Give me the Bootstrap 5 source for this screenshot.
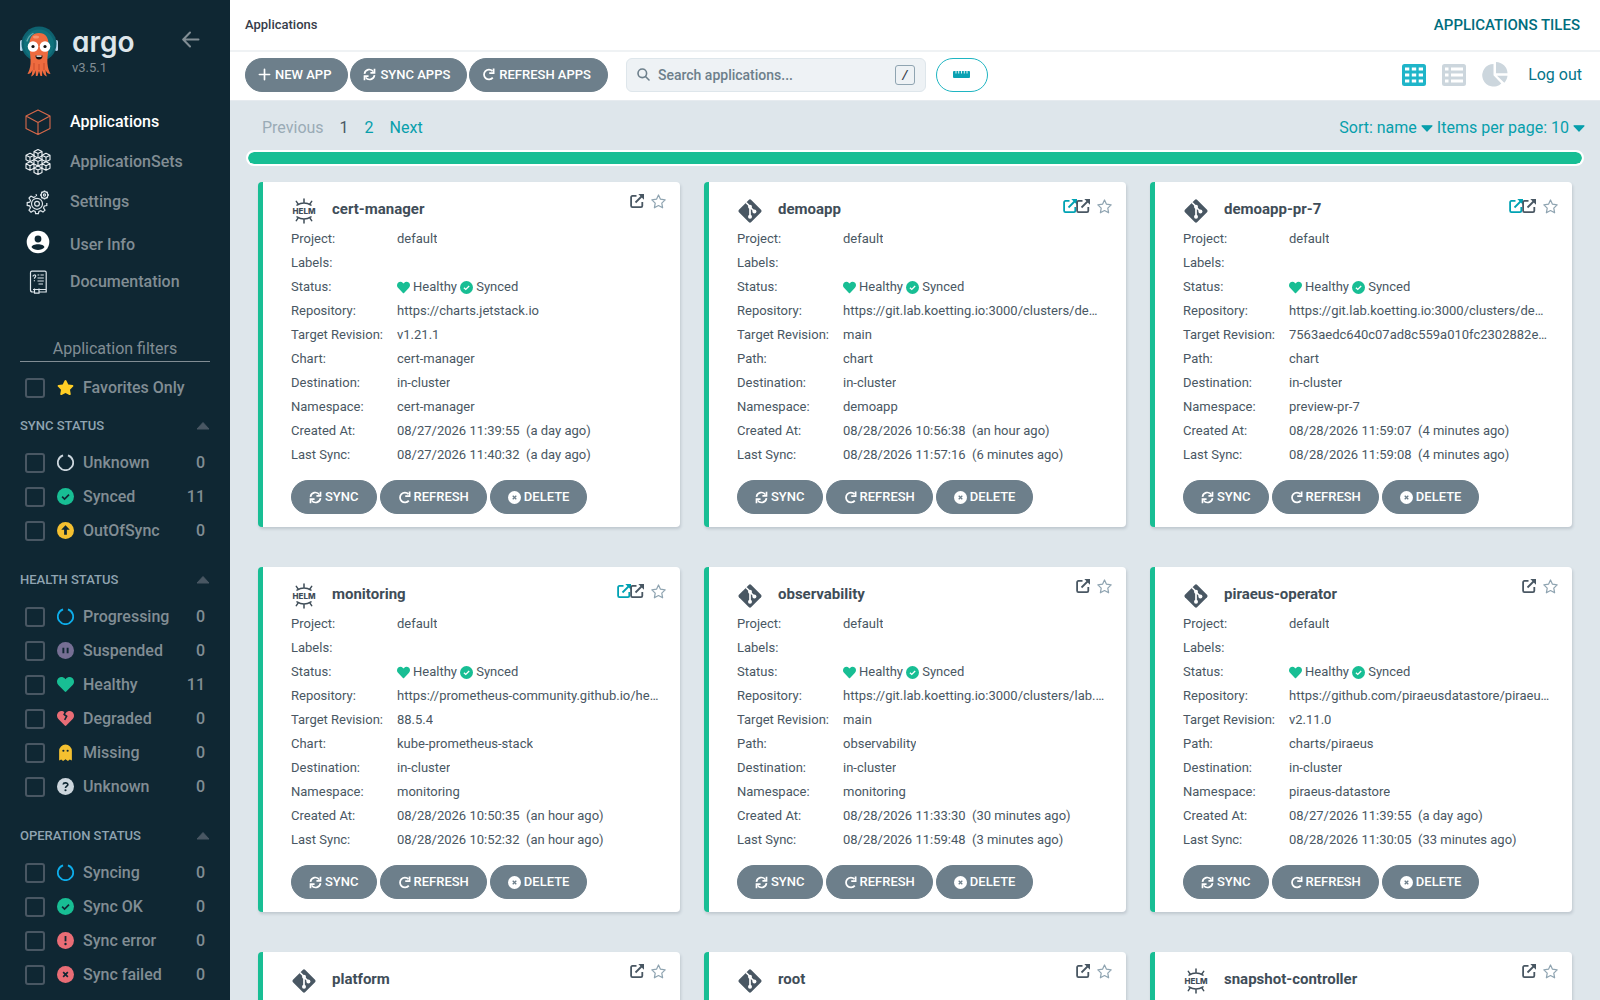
<!DOCTYPE html>
<html lang="en">
<head>
<meta charset="utf-8">
<meta name="viewport" content="width=device-width, initial-scale=1">
<title>Applications Tiles - Argo CD</title>
<link href="https://cdn.jsdelivr.net/npm/bootstrap@5.3.0/dist/css/bootstrap.min.css" rel="stylesheet">
<style>
  :root { --ink:#495763; --slate:#6d7f8b; --teal:#079fac; --deep:#006d7d; --ok:#18be94; --canvas:#dee6eb; --night:#0f2733; }
  body { font-family:Roboto,"Liberation Sans",sans-serif; font-size:13px; line-height:24px; color:var(--ink); background:var(--canvas); }
  a { text-decoration:none; }
  svg { display:block; flex:none; }
  .ic { width:1em; height:1em; }

  /* sidebar */
  .side { width:230px; background:var(--night); color:#818d94; flex:none; }
  .brand { height:102px; padding:26px 30px 0 20px; }
  .brand-text { margin-left:14px; }
  .brand-name { font-family:Inter,Roboto,sans-serif; font-feature-settings:"cv11"; font-weight:600; font-size:28px; line-height:32px; color:#dee6eb; margin-bottom:2px; }
  .brand-ver { line-height:16px; }
  .side-link { height:40px; padding-left:25px; gap:19px; font-size:16px; font-weight:500; color:#818d94; }
  .side-link.active { color:#fff; }
  .side-link .tall { padding-top:6px; }
  .filters { padding:35px 20px 0; }
  .filters-title { font-size:16px; font-weight:400; line-height:24px; border-bottom:1px solid #818d94; text-align:center; margin:0 0 9px; }
  .f-row { height:34px; padding:0 5px; font-size:16px; font-weight:500; }
  .f-row .form-check-input { width:20px; height:20px; margin:0 12px 0 0; background-color:transparent; border:2px solid #495763; border-radius:3px; }
  .f-row svg { width:17px; height:17px; margin:0 9px 1px 0; }
  .f-head { font-size:13px; font-weight:500; line-height:20px; color:#8fa4b1; margin:0 0 10px; }
  .f-head button { padding:0; border:0; background:none; }
  .f-group { margin-bottom:22px; }
  .f-first { margin-bottom:11px; }

  /* top bars */
  .crumbs { height:52px; padding:0 20px 0 15px; border-bottom:2px solid #eff2f4; color:#363c4a; font-weight:500; background:#fff; }
  .crumbs h1 { font-size:15px; font-weight:500; color:var(--deep); margin:0; }
  .tools { height:49px; padding:0 18px 3px 15px; background:#fff; border-bottom:1px solid #e6ebef; }
  .pill { --bs-btn-color:#fff; --bs-btn-bg:var(--slate); --bs-btn-border-color:var(--slate); --bs-btn-hover-color:#fff; --bs-btn-hover-bg:#495763; --bs-btn-hover-border-color:#495763;
    height:34px; border-radius:17px; padding:0 17px; font-size:13px; font-weight:500; line-height:32px; display:inline-flex; align-items:center; }
  .tool-pills { gap:2px; }
  .tools .pill { padding:0 16px 0 12px; gap:4px; }
  .search { width:300px; height:34px; margin-left:18px; padding:0 10px 0 10px; background:#eef2f5; border:1px solid #dee6eb; border-radius:6px; }
  .search input { font-size:14px; font-weight:500; color:var(--slate); background:none; border:0; padding:0; line-height:20px; box-shadow:none; }
  .search input::placeholder { color:var(--slate); opacity:1; }
  .key { width:20px; height:20px; border:1px solid #8fa4b1; border-radius:3px; text-align:center; padding:0; background:none; color:#363c4a; font:italic 500 13px/18px Roboto,sans-serif; }
  .ruler-btn { width:52px; height:34px; border:1px solid #1fb5c2; border-radius:17px; background:#fff; margin-left:10px; }
  .views { gap:16px; margin-right:20px; }
  .logout { font-size:16px; color:#04758a; }

  /* list */
  .pager { height:49px; padding:5px 15px 0 32px; font-size:16px; }
  .pager a, .pager button { color:var(--teal); }
  .pager button { border:0; background:none; padding:0; }
  .pager .off { color:#9aabb6; }
  .health-bar { height:16px; margin:0 16px; border:2px solid #fff; border-radius:8px; background:#fff; }
  .health-bar .progress-bar { background:var(--ok); border-radius:6px; }
  .tiles { padding:16px 28px 0; }
  .tiles .row { --bs-gutter-x:24px; --bs-gutter-y:40px; margin-top:-40px; }
  .tiles .row > * { margin-top:40px; }
  .tile { border:0; border-left:5px solid var(--ok); border-radius:4px; box-shadow:1px 2px 3px rgba(73,87,99,.2); padding:0 20px 13px 28px; min-height:345px; color:var(--ink); }
  .tile-top { height:45px; }
  .tile-top h2 { font-size:15px; font-weight:700; line-height:20px; margin:17px 0 0 15px; color:#3f4d58; }
  .tile-top > svg { margin-top:16px; width:26px; height:26px; }
  .marks { padding-top:11px; margin-right:-6px; gap:7px; height:27px; color:var(--ink); }
  .marks.linked { padding-top:16px; height:32px; }
  .marks a { color:#00a2b3; margin-right:-1px; }
  .marks button { border:0; padding:0; background:none; color:inherit; }
  .marks .fav { color:#8fa4b1; }
  .t-key { width:106px; flex:none; }
  .t-val { min-width:0; }
  .t-val svg { color:var(--ok); margin-right:3px; }
  .acts { gap:3px; padding-top:13px; }
  .acts .pill { gap:3px; }
</style>
</head>
<body class="vh-100 overflow-hidden">

<svg width="0" height="0" class="position-absolute" aria-hidden="true">
  <symbol id="sync" viewBox="0 0 14 14"><g fill="none" stroke="currentColor" stroke-width="1.8"><path d="M1.6 6.3a5.3 5.3 0 0 1 9.6-2.4M12.4 7.7a5.3 5.3 0 0 1-9.6 2.4"/><path d="M12.4 .8v4.5H8M1.6 13.2V8.7H6"/></g></symbol>
  <symbol id="redo" viewBox="0 0 14 14"><g fill="none" stroke="currentColor" stroke-width="1.9"><path d="M11.6 10.4A5.3 5.3 0 1 1 11.3 3.4"/><path d="M12.5 .6v4.9H7.8"/></g></symbol>
  <symbol id="plus" viewBox="0 0 14 14"><path d="M7 1.500v11M1.500 7h11" stroke="currentColor" stroke-width="1.800" stroke-linecap="round"/></symbol>
  <symbol id="xcirc" viewBox="0 0 16 16"><circle cx="8" cy="8" r="8" fill="currentColor"/><path d="M5.800 5.800l4.400 4.400M10.200 5.800l-4.400 4.400" stroke="var(--cut,#6d7f8b)" stroke-width="1.600"/></symbol>
  <symbol id="check" viewBox="0 0 16 16"><circle cx="8" cy="8" r="8" fill="currentColor"/><path d="M4.800 8.200l2.300 2.200 4.200-4.200" fill="none" stroke="var(--cut,#fff)" stroke-width="1.600"/></symbol>
  <symbol id="up" viewBox="0 0 16 16"><circle cx="8" cy="8" r="8" fill="currentColor"/><path d="M8 3l4 4.300H9.300V12H6.700V7.300H4z" fill="#0f2733"/></symbol>
  <symbol id="pause" viewBox="0 0 16 16"><circle cx="8" cy="8" r="8" fill="currentColor"/><path d="M6 5.300v5.400M10 5.300v5.400" stroke="#0f2733" stroke-width="1.800"/></symbol>
  <symbol id="bang" viewBox="0 0 16 16"><circle cx="8" cy="8" r="8" fill="currentColor"/><path d="M8 3.800v5" stroke="#0f2733" stroke-width="1.700"/><circle cx="8" cy="11.300" r="1.100" fill="#0f2733"/></symbol>
  <symbol id="quest" viewBox="0 0 16 16"><circle cx="8" cy="8" r="8" fill="currentColor"/><path d="M5.800 6.100C6 4 10.300 4.200 10.200 6.300 10.100 7.600 8 7.700 8 9.300" fill="none" stroke="#0f2733" stroke-width="1.600"/><circle cx="8" cy="11.500" r="1" fill="#0f2733"/></symbol>
  <symbol id="ring" viewBox="0 0 16 16"><path d="M10.300 1.200a7.200 7.200 0 1 1-4.600 0" fill="none" stroke="currentColor" stroke-width="1.700"/></symbol>
  <symbol id="heart" viewBox="0 0 512 512"><path fill="currentColor" d="M462.300 62.600C407.500 15.900 326 24.300 275.700 76.200L256 96.500l-19.700-20.300C186.100 24.300 104.500 15.900 49.700 62.600c-62.800 53.600-66.100 149.800-9.900 207.900l193.500 199.800c12.500 12.900 32.800 12.900 45.300 0l193.500-199.800c56.300-58.100 53-154.300-9.800-207.900z"/></symbol>
  <symbol id="broken" viewBox="0 0 512 512"><use href="#heart"/><path d="M285 40l-45 95 75 55-60 105" transform="translate(-25 0)" fill="none" stroke="#0f2733" stroke-width="48"/></symbol>
  <symbol id="ghost" viewBox="0 0 16 16"><path fill="currentColor" d="M2 6.500a6 6 0 0 1 12 0v9l-2-1-1.700 1.400L8 14.400l-2.300 1.500L4 14.500l-2 1z"/><circle cx="6" cy="6.400" r="1" fill="#0f2733"/><circle cx="10" cy="6.400" r="1" fill="#0f2733"/></symbol>
  <symbol id="star" viewBox="0 0 576 512"><path fill="currentColor" d="M259.300 17.800L194 150.200 47.900 171.500c-26.200 3.800-36.700 36.100-17.700 54.600l105.700 103-25 145.500c-4.500 26.300 23.200 46 46.400 33.700L288 439.600l130.700 68.700c23.200 12.200 50.900-7.400 46.400-33.700l-25-145.500 105.700-103c19-18.500 8.500-50.800-17.700-54.600L382 150.200 316.700 17.800c-11.700-23.600-45.600-23.900-57.400 0z"/></symbol>
  <symbol id="staro" viewBox="0 0 16 16"><path fill="none" stroke="currentColor" stroke-width="1.300" stroke-linejoin="round" d="M8 1l2.100 4.500 5 .7-3.600 3.500.9 5L8 12.300l-4.400 2.400.9-5L.9 6.200l5-.7z"/></symbol>
  <symbol id="ext" viewBox="0 0 14 14"><g fill="none" stroke="currentColor" stroke-width="1.800"><path d="M6.500 1.900H2.400a1.300 1.300 0 0 0-1.300 1.300v8.600a1.300 1.300 0 0 0 1.300 1.300h8.600a1.300 1.300 0 0 0 1.300-1.300V8"/><path d="M5.500 8.500L12 2"/></g><path fill="currentColor" d="M8.300 0H14v5.700z"/></symbol>
  <symbol id="caret-up" viewBox="0 0 14 8"><path d="M7 .5L13 7H1z" fill="#495763" stroke="#495763" stroke-linejoin="round"/></symbol>
  <symbol id="caret-down" viewBox="0 0 10 6"><path d="M.7.700h8.600L5 5.300z" fill="currentColor" stroke="currentColor" stroke-linejoin="round"/></symbol>
  <symbol id="git" viewBox="0 0 26 26"><rect x="4.300" y="4.300" width="17.400" height="17.400" rx="1.800" transform="rotate(45 13 13)" fill="#495763"/><g stroke="#fff" stroke-width="1.700" fill="none"><path d="M9 4.500l4 4V19M13 9l4.500 4.500"/></g><g fill="#fff"><circle cx="13" cy="8.800" r="2"/><circle cx="13" cy="18.800" r="2"/><circle cx="17.400" cy="13.400" r="2"/></g></symbol>
  <symbol id="helm" viewBox="0 0 26 26"><g fill="none" stroke="#3f4d58" stroke-width="1.500" stroke-linecap="round"><path d="M6 7.200q7-4.400 14 0M13 4.800V.9M7.400 6.400L5.300 3.400M18.600 6.400l2.100-3M6 18.800q7 4.400 14 0M13 21.200v3.900M7.400 19.600l-2.100 3M18.600 19.600l2.100 3"/></g><text x="13" y="15.900" text-anchor="middle" font-family="Inter, sans-serif" font-weight="800" font-size="8" fill="#3f4d58">HELM</text></symbol>
</svg>

<div class="d-flex h-100">
  <aside class="side h-100 overflow-hidden">
    <div class="brand d-flex align-items-start">
      <svg width="38" height="51" viewBox="0 0 38 51" role="img" aria-label="Argo">
        <rect x="0" y="14" width="3" height="11" rx="1.500" fill="#b8d4ea"/><rect x="35" y="14" width="3" height="11" rx="1.500" fill="#b8d4ea"/>
        <circle cx="19" cy="18" r="17.500" fill="#0e6270"/><circle cx="19" cy="18.500" r="15" fill="#10717c"/>
        <path d="M7 15a13 13 0 0 1 6-7.500" stroke="#5fa9b0" stroke-width="1.300" fill="none" stroke-linecap="round"/>
        <path d="M19 7c-6.500 0-9.500 4.500-9.500 11 0 9 1.500 13 1 20-.3 4-1.500 7-3 10 2.500 0 4-1.500 4.800-4 0 2.500-.3 4.500-1.300 6.500 2.500-.5 4-3 4.300-6 .4 2 .7 4 .5 5.500h1.700l1.500-5 1.500 5h1.700c-.2-1.500 0-3.500.5-5.500.3 3 1.800 5.500 4.300 6-1-2-1.300-4-1.300-6.500.8 2.500 2.300 4 4.800 4-1.500-3-2.700-6-3-10-.5-7 1-11 1-20C28.500 11.500 25.500 7 19 7z" fill="#ee6b3f"/>
        <path d="M14 37v7M19 38v6M24 37v7" stroke="#c94d2c" stroke-width="1"/>
        <ellipse cx="16" cy="11" rx="3" ry="1.500" fill="#f5946f"/>
        <circle cx="13" cy="20.500" r="5.300" fill="#fff"/><circle cx="25" cy="20.500" r="5.300" fill="#fff"/>
        <circle cx="13" cy="20.500" r="1.600" fill="#111"/><circle cx="25" cy="20.500" r="1.600" fill="#111"/>
        <path d="M15.500 29.500h7a3.500 4 0 0 1-7 0z" fill="#111"/><path d="M16.500 29.500h5v1.300h-5z" fill="#fff"/>
      </svg>
      <div class="brand-text flex-grow-1">
        <div class="brand-name">argo</div>
        <div class="brand-ver">v3.5.1</div>
      </div>
      <button type="button" class="btn p-0 border-0" aria-label="Collapse sidebar"><svg class="mt-1" width="18" height="18" viewBox="0 0 18 18" fill="none" stroke="#818d94" stroke-width="2" stroke-linecap="round" stroke-linejoin="round"><path d="M16.500 9.500H1.500M8 2.500L1.200 9.500 8 16.500"/></svg></button>
    </div>

    <nav>
      <a href="#" class="side-link active d-flex align-items-center" aria-current="page"><svg width="26" height="26" viewBox="0 0 26 26" fill="none" stroke="#d9694a" stroke-width="1.100" stroke-linejoin="round"><path d="M13 1l12 6v12.500l-12 6-12-6V7zM1 7l12 6.500L25 7M13 13.500v12"/></svg><span>Applications</span></a>
      <a href="#" class="side-link d-flex align-items-center"><svg width="26" height="26" viewBox="0 0 26 26" fill="#0f2733" stroke="#eef2f5" stroke-width="1.100" stroke-linejoin="round"><defs><path id="cube" d="M0-4.200l4 2v4.400l-4 2-4-2v-4.400zM-4-2.200l4 2 4-2M0-.2v4.400"/></defs><use href="#cube" x="13" y="4.700"/><use href="#cube" x="5" y="8.500"/><use href="#cube" x="21" y="8.500"/><use href="#cube" x="5" y="17"/><use href="#cube" x="21" y="17"/><use href="#cube" x="13" y="12.800"/><use href="#cube" x="13" y="21.300"/></svg><span>ApplicationSets</span></a>
      <a href="#" class="side-link d-flex align-items-center"><svg width="26" height="26" viewBox="0 1 26 26" fill="none" stroke="#dee6eb" stroke-width="1.200"><path d="M11 6.200l.6 2M6 8l-2 2 1.500 2.500-.8 1.700-2.500.4v2.800l2.500.5.800 1.800L4 22.200l2 2 2.300-1.500 1.900.8.400 2.200h2.800l.5-2.200 1.900-.8 2.200 1.400 2-2-1.500-2.200.8-1.900 2.500-.5v-2.400M6 8l2.500 1.500 2.300-1"/><circle cx="12" cy="15.800" r="5.500"/><circle cx="12" cy="15.800" r="2.400"/><circle cx="19.500" cy="7" r="3.300"/><circle cx="19.500" cy="7" r="1.100"/><path d="M19.500 2.500v1.300M19.500 10.200v1.300M15 7h1.300M22.700 7H24M16.400 3.900l.8.800M21.800 9.300l.8.800M22.600 3.900l-.8.800M17.200 9.300l-.8.800" stroke-width="1.600"/></svg><span>Settings</span></a>
      <a href="#" class="side-link d-flex align-items-center"><svg width="26" height="26" viewBox="0 0 26 26"><circle cx="13" cy="13" r="11.300" fill="#fff"/><circle cx="13" cy="10" r="3.400" fill="#0f2733"/><path d="M6.600 18.300c0-4 12.800-4 12.800 0-2.800 3.500-10 3.500-12.800 0z" fill="#0f2733"/></svg><span class="tall">User Info</span></a>
      <a href="#" class="side-link d-flex align-items-center"><svg width="26" height="26" viewBox="0 0 26 26" fill="none" stroke="#dee6eb" stroke-width="1.200"><path d="M8 20.500h13.200V3.500a1.300 1.300 0 0 0-1.300-1.300H7a1.600 1.600 0 0 0-1.500 1.600V21a2 2 0 0 0 2 2h2M14 23h7.200v-2.500M9.500 19.500v4.700h4.500v-4.700M12.500 6h1.800M15.500 6h3.300M12.500 9h6.300M12.500 12h6.300M13.500 15h4.500M8 7.500c0-2 3-2 2.700-.2-.2 1-1.300 1.100-1.300 2.500M9.400 11.200v1"/></svg><span>Documentation</span></a>
    </nav>

    <div class="filters">
      <h2 class="filters-title">Application filters</h2>
      <div id="filters"></div>
    </div>
  </aside>

  <main class="flex-grow-1 overflow-hidden">
    <header class="crumbs d-flex align-items-center justify-content-between"><span>Applications</span><h1>APPLICATIONS TILES</h1></header>

    <div class="tools d-flex align-items-center">
      <div class="tool-pills d-flex" role="group" aria-label="Application actions">
        <button type="button" class="btn pill"><svg class="ic"><use href="#plus"/></svg>NEW APP</button>
        <button type="button" class="btn pill"><svg class="ic"><use href="#sync"/></svg>SYNC APPS</button>
        <button type="button" class="btn pill"><svg class="ic"><use href="#redo"/></svg>REFRESH APPS</button>
      </div>
      <div class="search d-flex align-items-center">
        <svg width="13" height="13" viewBox="0 0 13 13" fill="none" stroke="#6d7f8b" stroke-width="1.600" stroke-linecap="round"><circle cx="5.300" cy="5.300" r="4.300"/><path d="M8.500 8.500L12 12"/></svg>
        <input type="search" class="form-control ms-2" placeholder="Search applications..." aria-label="Search applications">
        <button type="button" class="key flex-shrink-0">/</button>
      </div>
      <button type="button" class="ruler-btn d-flex align-items-center justify-content-center" aria-label="Show health bar"><svg width="17" height="7" viewBox="0 0 17 7"><rect width="17" height="7" rx="1" fill="#0aa2b3"/><path d="M3 0v2.500M5.700 0v2.500M8.500 0v2.500M11.300 0v2.500M14 0v2.500" stroke="#fff" stroke-width=".9"/></svg></button>
      <div class="views d-flex align-items-center ms-auto">
        <a href="#" aria-label="Tiles"><svg width="24" height="22" viewBox="0 0 24 22"><rect width="24" height="22" rx="2.500" fill="#1fb5c9"/><path fill="#fff" d="M3 3.500h4.300v3H3zM9.800 3.500h4.400v3H9.800zM16.700 3.500H21v3h-4.300zM3 9.500h4.300v3H3zM9.800 9.500h4.400v3H9.800zM16.700 9.500H21v3h-4.300zM3 15.500h4.300v3H3zM9.800 15.500h4.400v3H9.800zM16.700 15.500H21v3h-4.300z"/></svg></a>
        <a href="#" aria-label="List"><svg width="24" height="22" viewBox="0 0 24 22"><rect width="24" height="22" rx="2.500" fill="#ccd6dd"/><path fill="#fff" d="M3 3.500h3.500v3H3zM9 3.500h12v3H9zM3 9.500h3.500v3H3zM9 9.500h12v3H9zM3 15.500h3.500v3H3zM9 15.500h12v3H9z"/></svg></a>
        <a href="#" aria-label="Summary"><svg width="26" height="25" viewBox="0 0 26 25" fill="#ccd6dd"><path d="M11.500 2v11.300l7.800 8.200A11.300 11.300 0 1 1 11.500 2zM14 0a11.700 11.700 0 0 1 11.500 11.300H14zM15 13.700h10.500c-.3 2.600-1.400 5-3.200 7.100z"/></svg></a>
      </div>
      <a href="#" class="logout">Log out</a>
    </div>

    <div class="pager d-flex align-items-center justify-content-between">
      <nav class="d-flex" aria-label="Pages"><span class="off">Previous</span><span class="ms-3">1</span><a href="#" class="ms-3">2</a><a href="#" class="ms-3">Next</a></nav>
      <div class="d-flex gap-1">
        <button type="button" class="d-flex align-items-center gap-1">Sort: name <svg width="12" height="7"><use href="#caret-down"/></svg></button>
        <button type="button" class="d-flex align-items-center gap-1">Items per page: 10 <svg width="12" height="7"><use href="#caret-down"/></svg></button>
      </div>
    </div>
    <div class="progress health-bar" role="progressbar" aria-label="Healthy applications" aria-valuenow="100" aria-valuemin="0" aria-valuemax="100"><div class="progress-bar w-100"></div></div>

    <div class="tiles"><div class="row row-cols-3" id="tiles"></div></div>
  </main>
</div>

<script src="https://cdn.jsdelivr.net/npm/bootstrap@5.3.0/dist/js/bootstrap.bundle.min.js"></script>
<script>
  const icon = (id, extra = '') => `<svg ${extra}><use href="#${id}"/></svg>`;

  const filterRow = (group, [name, glyph, color, count]) => {
    const id = `${group}-${name}`.replace(/\s/g, '');
    return `<div class="f-row d-flex align-items-center">
      <input class="form-check-input" type="checkbox" id="${id}">
      <label class="d-flex align-items-center flex-grow-1" for="${id}">${icon(glyph, `style="color:${color};--cut:#0f2733"`)}${name}<span class="ms-auto">${count}</span></label></div>`;
  };
  const groups = [
    ['SYNC STATUS', [['Unknown', 'ring', '#ccd6dd', 0], ['Synced', 'check', '#18be94', 11], ['OutOfSync', 'up', '#f4c030', 0]]],
    ['HEALTH STATUS', [['Progressing', 'ring', '#0dadea', 0], ['Suspended', 'pause', '#766f94', 0], ['Healthy', 'heart', '#18be94', 11], ['Degraded', 'broken', '#e96d76', 0], ['Missing', 'ghost', '#f4c030', 0], ['Unknown', 'quest', '#ccd6dd', 0]]],
    ['OPERATION STATUS', [['Syncing', 'ring', '#0dadea', 0], ['Sync OK', 'check', '#18be94', 0], ['Sync error', 'bang', '#e96d76', 0], ['Sync failed', 'xcirc', '#e96d76', 0]]]
  ];
  document.getElementById('filters').innerHTML =
    `<div class="f-first">${filterRow('fav', ['Favorites Only', 'star', '#ffce25', ''])}</div>` +
    groups.map(([title, rows]) => `<section class="f-group">
      <h3 class="f-head d-flex align-items-center justify-content-between">${title}<button type="button" aria-label="Collapse ${title}">${icon('caret-up', 'width="14" height="8"')}</button></h3>
      ${rows.map(r => filterRow(title, r)).join('')}</section>`).join('');

  // name, source type, has external link, repository, revision, chart or path, namespace, created, last sync
  const apps = [
    ['cert-manager', 'helm', 0, 'https://charts.jetstack.io', 'v1.21.1', 'cert-manager', 'cert-manager', '08/27/2026 11:39:55 &nbsp;(a day ago)', '08/27/2026 11:40:32 &nbsp;(a day ago)'],
    ['demoapp', 'git', 1, 'https://git.lab.koetting.io:3000/clusters/demoapp', 'main', 'chart', 'demoapp', '08/28/2026 10:56:38 &nbsp;(an hour ago)', '08/28/2026 11:57:16 &nbsp;(6 minutes ago)'],
    ['demoapp-pr-7', 'git', 1, 'https://git.lab.koetting.io:3000/clusters/demoapp', '7563aedc640c07ad8c559a010fc2302882e00000', 'chart', 'preview-pr-7', '08/28/2026 11:59:07 &nbsp;(4 minutes ago)', '08/28/2026 11:59:08 &nbsp;(4 minutes ago)'],
    ['monitoring', 'helm', 1, 'https://prometheus-community.github.io/helm-charts', '88.5.4', 'kube-prometheus-stack', 'monitoring', '08/28/2026 10:50:35 &nbsp;(an hour ago)', '08/28/2026 10:52:32 &nbsp;(an hour ago)'],
    ['observability', 'git', 0, 'https://git.lab.koetting.io:3000/clusters/lab.koetting.io', 'main', 'observability', 'monitoring', '08/28/2026 11:33:30 &nbsp;(30 minutes ago)', '08/28/2026 11:59:48 &nbsp;(3 minutes ago)'],
    ['piraeus-operator', 'git', 0, 'https://github.com/piraeusdatastore/piraeus-operator', 'v2.11.0', 'charts/piraeus', 'piraeus-datastore', '08/27/2026 11:39:55 &nbsp;(a day ago)', '08/28/2026 11:30:05 &nbsp;(33 minutes ago)'],
    ['platform', 'git', 0], ['root', 'git', 0], ['snapshot-controller', 'helm', 0]
  ];
  const line = (k, v) => `<div class="d-flex"><div class="t-key">${k}:</div><div class="t-val text-truncate">${v}</div></div>`;
  const status = `<span class="d-flex align-items-center">${icon('heart', 'class="ic"')}Healthy&nbsp;${icon('check', 'class="ic"')}Synced</span>`;
  document.getElementById('tiles').innerHTML = apps.map(([name, type, link, repo, rev, source, ns, created, synced]) => `
    <div class="col"><article class="card tile">
      <div class="tile-top d-flex align-items-start">${icon(type)}<h2>${name}</h2>
        <div class="marks d-flex align-items-center ms-auto ${link ? 'linked' : ''}">
          <div class="d-flex">${link ? `<a href="#" aria-label="Open ${name}">${icon('ext', 'width="14" height="14"')}</a>` : ''}
          <button type="button" aria-label="Open in new tab">${icon('ext', 'width="14" height="14"')}</button></div>
          <button type="button" class="fav" aria-label="Add to favorites">${icon('staro', 'width="15" height="15"')}</button></div></div>
      ${repo ? line('Project', 'default') + line('Labels', '') + line('Status', status) + line('Repository', repo) + line('Target Revision', rev)
        + line(type === 'helm' ? 'Chart' : 'Path', source) + line('Destination', 'in-cluster') + line('Namespace', ns) + line('Created At', created) + line('Last Sync', synced)
        + `<div class="acts d-flex"><button type="button" class="btn pill">${icon('sync', 'class="ic"')}SYNC</button><button type="button" class="btn pill">${icon('redo', 'class="ic"')}REFRESH</button><button type="button" class="btn pill">${icon('xcirc', 'class="ic"')}DELETE</button></div>` : ''}
    </article></div>`).join('');
</script>
</body>
</html>
